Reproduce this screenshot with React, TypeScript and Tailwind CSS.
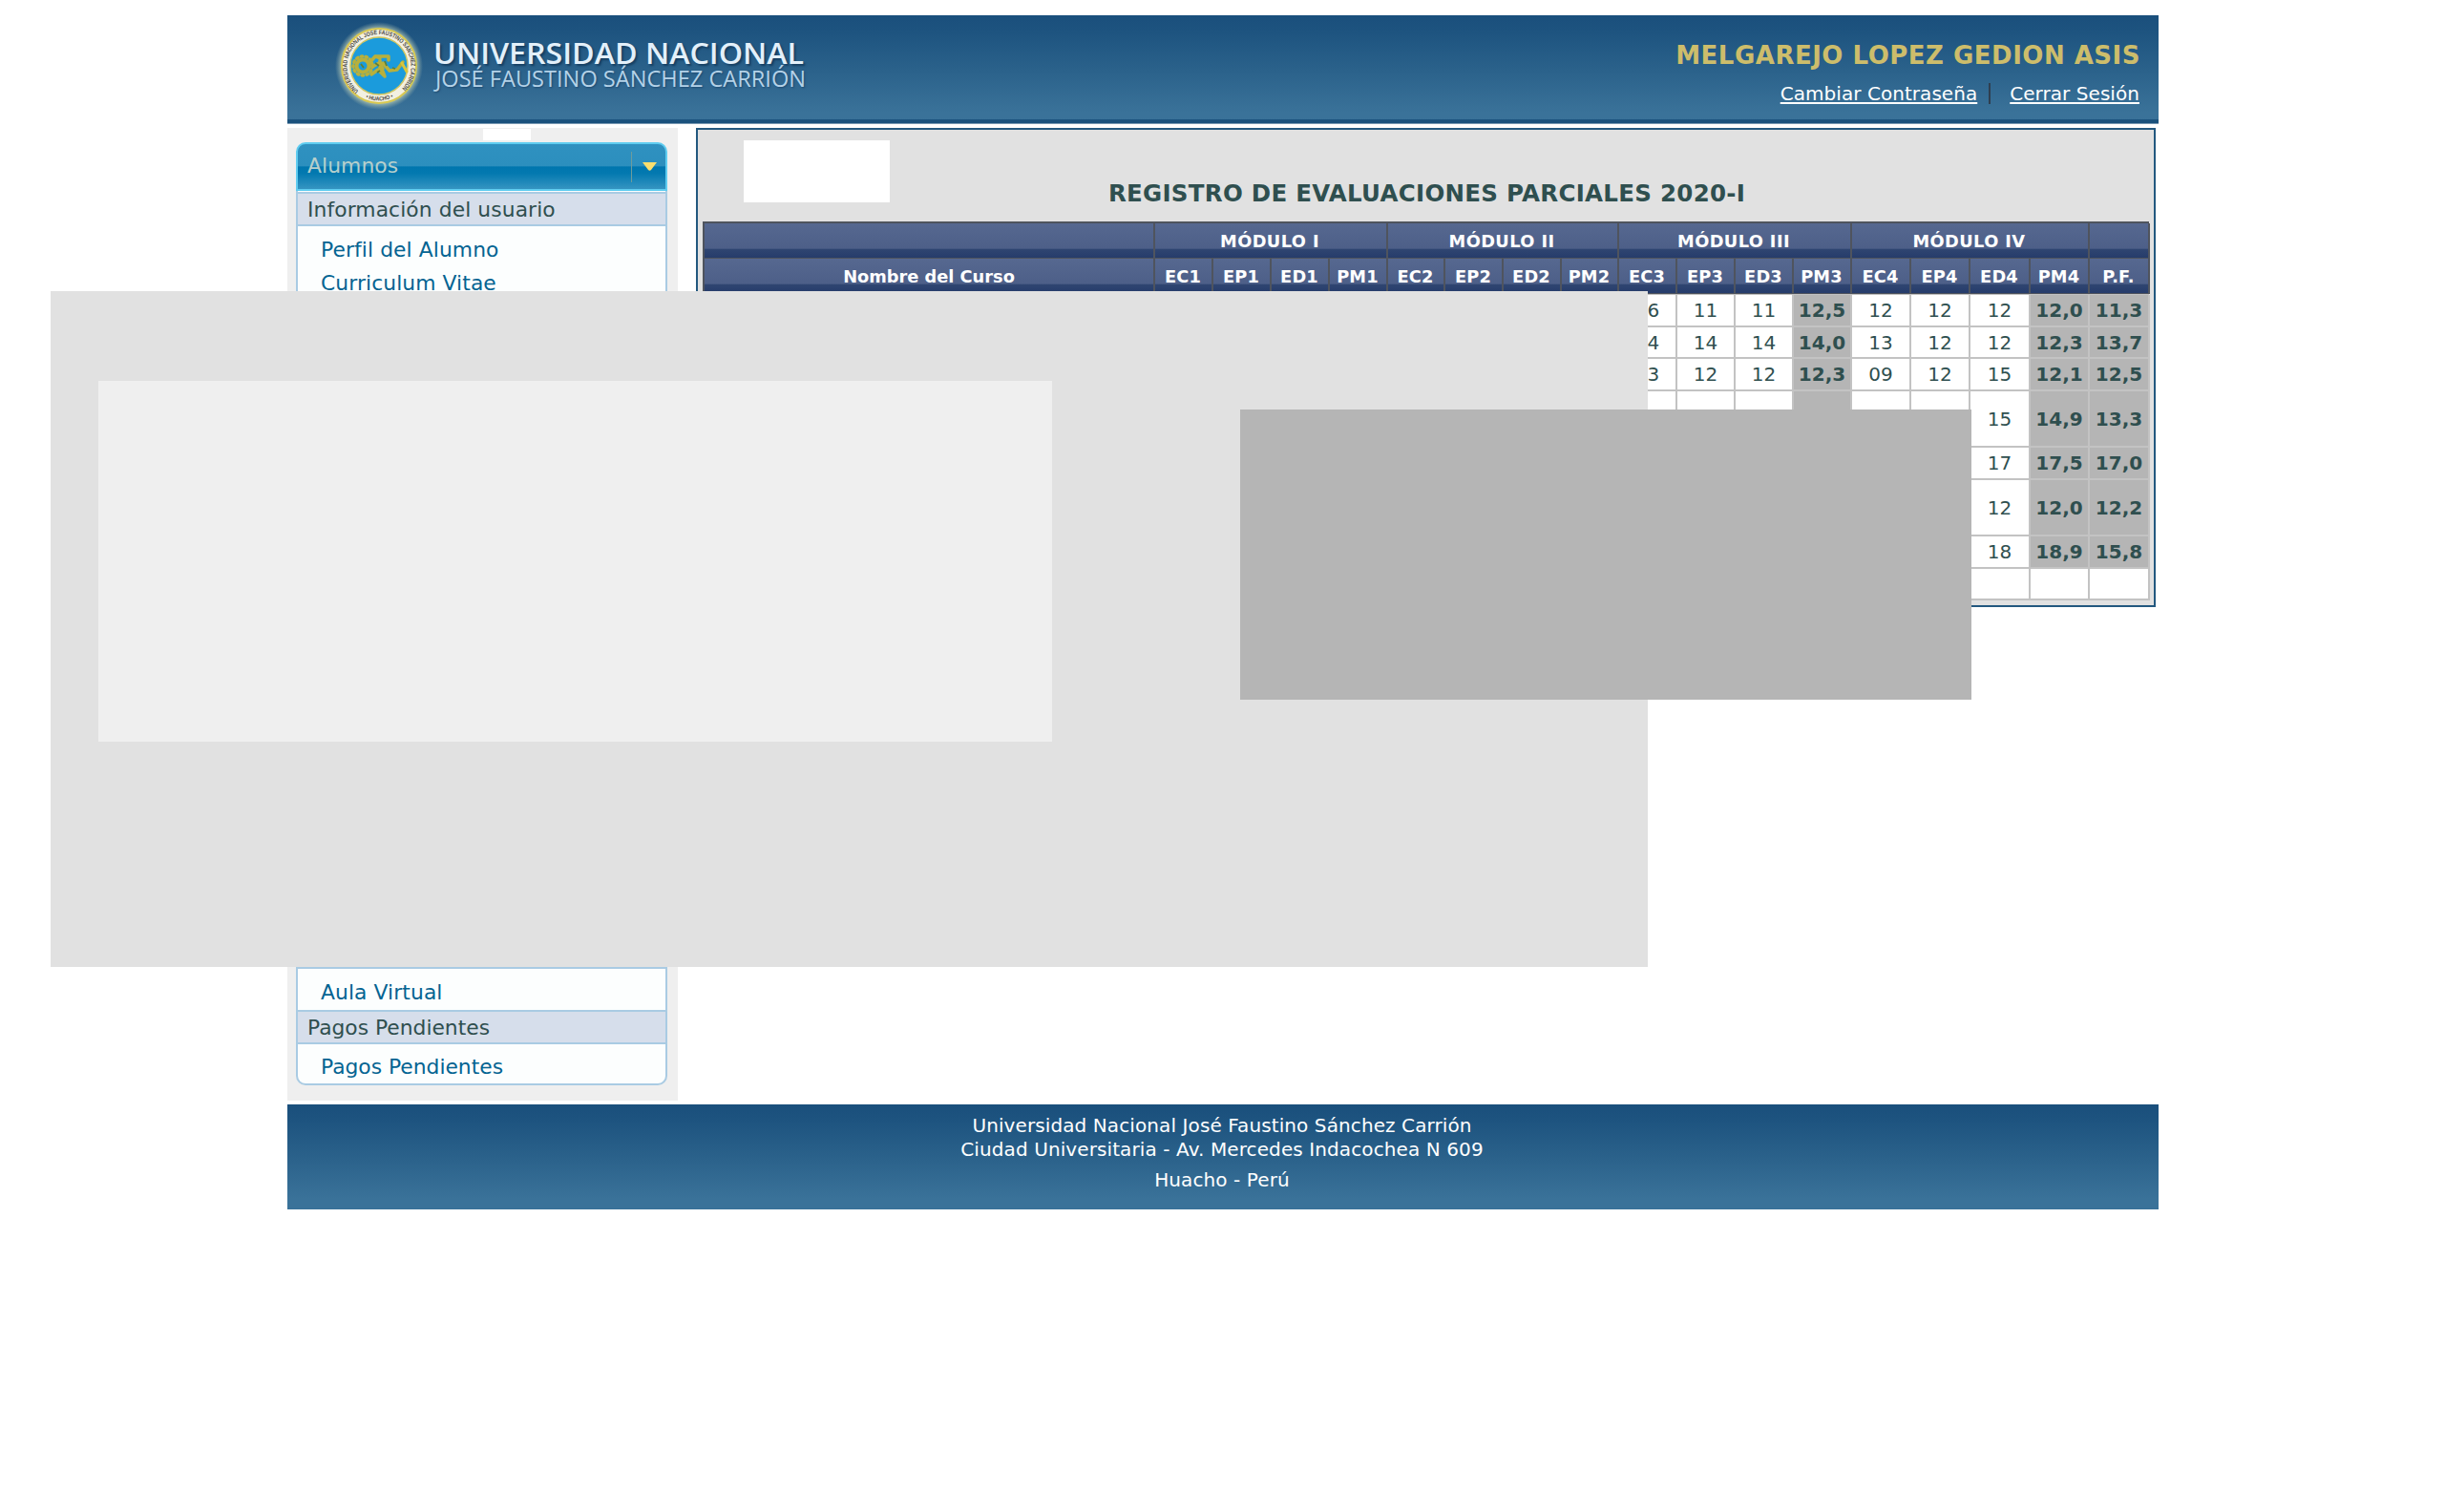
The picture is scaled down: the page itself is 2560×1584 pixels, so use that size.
import React from "react";

const items = (a: string) => a.split(" ");
const cols =
  "grid grid-cols-[472px_61px_61px_61px_61px_60px_61px_61px_60px_61px_61px_61px_61px_62px_62px_63px_62px_63px]";
const dark = "border-r-2 border-b border-[#4f545e]";

const heads = items("EC1 EP1 ED1 PM1 EC2 EP2 ED2 PM2 EC3 EP3 ED3 PM3 EC4 EP4 ED4 PM4 P.F.");
const rows: { h: string; v: string[] }[] = [
  { h: "h-[34px]", v: items("16 11 11 12,5 12 12 12 12,0 11,3") },
  { h: "h-[33px]", v: items("14 14 14 14,0 13 12 12 12,3 13,7") },
  { h: "h-[34px]", v: items("13 12 12 12,3 09 12 15 12,1 12,5") },
  { h: "h-[59px]", v: ["", "", "", "", "", "", "15", "14,9", "13,3"] },
  { h: "h-[34px]", v: ["", "", "", "", "", "", "17", "17,5", "17,0"] },
  { h: "h-[59px]", v: ["", "", "", "", "", "", "12", "12,0", "12,2"] },
  { h: "h-[34px]", v: ["", "", "", "", "", "", "18", "18,9", "15,8"] },
  { h: "h-[33px]", v: ["", "", "", "", "", "", "", "", ""] },
];

function Seal() {
  return (
    <svg className="h-[106px] w-[96px] shrink-0" viewBox="0 0 96 106" fontFamily="Liberation Sans, sans-serif">
      <defs>
        <radialGradient id="halo">
          <stop offset="0.82" stopColor="#d9e2b8" stopOpacity="0.85" />
          <stop offset="1" stopColor="#9fb8b0" stopOpacity="0" />
        </radialGradient>
        <path id="arc" d="M26.500 79.200A33.500 33.500 0 1 1 69.500 79.200" />
        <path id="low" d="M32 85.500Q48 93.500 64 85.500" />
      </defs>
      <circle cx="48" cy="53" r="46" fill="url(#halo)" />
      <circle cx="48" cy="53" r="39" fill="#f3f0e2" stroke="#d8c852" strokeWidth="2" />
      <circle cx="48" cy="53" r="30" fill="#1b9bdc" stroke="#cfc663" strokeWidth="1.500" />
      <text fontSize="6.500" fontWeight="bold" fill="#4b4a46">
        <textPath href="#arc" textLength="160" lengthAdjust="spacingAndGlyphs">UNIVERSIDAD NACIONAL JOSE FAUSTINO SANCHEZ CARRION</textPath>
      </text>
      <text fontSize="6" fontWeight="bold" fill="#4b4a46">
        <textPath href="#low" startOffset="2" textLength="30" lengthAdjust="spacingAndGlyphs">• HUACHO •</textPath>
      </text>
      <g fill="none" stroke="#b8b03c" strokeLinecap="round" strokeLinejoin="round">
        <circle cx="31" cy="53" r="10" strokeWidth="3.500" strokeDasharray="1.500 3.500" />
        <circle cx="31" cy="53" r="6.500" strokeWidth="4" />
        <path strokeWidth="3.500" d="M38 50l6-7 5 2M41 54l7-4 4 6M44 43h14v4M49 47v8M40 62l7-5 6 6M51 56l3 8M52 50l7 8 8-1 6-8" />
        <path strokeWidth="3" stroke="#d9c53c" d="M72 50l5 9" />
      </g>
      <path d="M44 50l4 3M54 48l2 5M29 51l3 4M46 60l3-2M62 55l3 1" stroke="#5d7f3a" strokeWidth="1.800" />
    </svg>
  );
}

function Header() {
  return (
    <header className="flex h-[114px] w-[1960px] justify-between border-b border-b-[#7898b2] bg-[linear-gradient(#1a4f7c_0%,#1d537f_14%,#2b628b_52%,#3a7299_90%,#3a7299_96%,#1a517c_97%)]">
      <div className="flex pl-[48px]">
        <Seal />
        <svg className="h-[100px] w-[410px]" viewBox="0 0 410 100" fontFamily="Open Sans, sans-serif">
          <text
            x="9"
            y="50.500"
            fontSize="31"
            fontWeight="600"
            fill="#e3f0fa"
            textLength="388"
            lengthAdjust="spacingAndGlyphs"
            className="[text-shadow:2px_2px_2px_#163f62]"
          >
            UNIVERSIDAD NACIONAL
          </text>
          <text
            x="11"
            y="74.500"
            fontSize="23.500"
            fill="#b4d2e8"
            textLength="388"
            lengthAdjust="spacingAndGlyphs"
            className="[text-shadow:1px_1px_2px_#1d4a70]"
          >
            JOSÉ FAUSTINO SÁNCHEZ CARRIÓN
          </text>
        </svg>
      </div>
      <div className="flex flex-col items-end pr-5 pt-[26px] whitespace-nowrap">
        <div className="-mr-px h-[32px] text-[26px] leading-[32px] font-bold tracking-[0.5px] text-[#cdbd6b]">MELGAREJO LOPEZ GEDION ASIS</div>
        <div className="mt-[10px] flex h-[28px] items-center text-[20px] leading-[28px] tracking-[0.05px] text-white">
          <span className="underline decoration-2 underline-offset-2">Cambiar Contraseña</span>
          <span className="ml-[12px] mr-[20px] h-[22px] w-[2px] bg-[#2f3f50]" />
          <span className="underline decoration-2 underline-offset-2">Cerrar Sesión</span>
        </div>
      </div>
    </header>
  );
}

function Sidebar() {
  return (
    <nav className="flex h-[1019px] w-[409px] flex-col bg-[#efefef] pl-[9px] text-[21.800px] tracking-[0.1px] whitespace-nowrap">
      <div className="ml-[196px] mt-px h-[12px] w-[50px] bg-white" />
      <div className="mt-[2px] flex h-[51px] w-[389px] items-center justify-between rounded-t-[10px] border-2 border-[#5fccf0] bg-[linear-gradient(#2f91c0_0%,#2c8fbe_48%,#0076ae_51%,#0379b0_65%,#3594c1_100%)] pr-[9px] pl-[10px] text-[#b6cfcc]">
        <span>Alumnos</span>
        <div className="flex items-center gap-[11px]">
          <span className="h-[32px] w-px bg-[#6d9c9c]" />
          <svg className="h-[9px] w-[15px]" viewBox="0 0 15 9"><path d="M0 0H15L9 8Q7.500 9.500 6 8Z" fill="#fbdf6e" /></svg>
        </div>
      </div>
      <div className="flex h-[937px] w-[389px] flex-col rounded-b-[10px] border-x-2 border-b-2 border-[#a9cbe3] bg-[#fcfefe]">
        <div className="mt-px h-[36px] border-y-2 border-[#a9cbe3] bg-[#d6deeb] pl-[10px] leading-[33px] text-[#2f4f4f]">Información del usuario</div>
        <div className="flex grow flex-col pl-[24px] pt-[7px] leading-[36px] text-[#046492]">
          <span className="h-[35px]">Perfil del Alumno</span>
          <span className="h-[35px]">Curriculum Vitae</span>
        </div>
        <div className="flex h-[45px] items-center border-t-2 border-[#a9cbe3] pl-[24px] pt-[7px] text-[#046492]">Aula Virtual</div>
        <div className="h-[36px] border-y-2 border-[#a9cbe3] bg-[#d6deeb] pl-[10px] leading-[33px] tracking-normal text-[#2f4f4f]">Pagos Pendientes</div>
        <div className="flex h-[41px] items-center pt-[7px] pl-[24px] tracking-normal text-[#046492]">Pagos Pendientes</div>
      </div>
    </nav>
  );
}

const headBg = "bg-[linear-gradient(#566890_0%,#4d5f88_73%,#2f4571_75%,#263c6b_100%)] flex items-center justify-center";

function Grades() {
  return (
    <main className="flex h-[502px] w-[1529px] flex-col border-2 border-[#23587f] bg-[#e1e1e1] pl-[5px]">
      <div className="relative h-[96px] text-center">
        <div className="ml-[43px] mt-[11px] h-[65px] w-[153px] bg-white" />
        <div className="absolute inset-x-0 top-[51px] pr-[3px] text-[24.500px] leading-[32px] font-bold tracking-[0.280px] text-[#2f4f4f]">REGISTRO DE EVALUACIONES PARCIALES 2020-I</div>
      </div>
      <div className="w-[1515px] border-l-2 border-t-2 border-[#4f545e] text-[17.800px] font-bold text-white">
        <div className={cols + " h-[37px]"}>
          <div className={dark + " " + headBg} />
          {["MÓDULO I", "MÓDULO II", "MÓDULO III", "MÓDULO IV"].map((m) => (
            <div key={m} className={dark + " col-span-4 pt-[3px] pr-[2px] tracking-[0.4px] " + headBg}>{m}</div>
          ))}
          <div className={dark + " " + headBg} />
        </div>
        <div className={cols + " h-[37px]"}>
          <div className={dark + " pt-[3px] " + headBg}>Nombre del Curso</div>
          {heads.map((m) => (
            <div key={m} className={dark + " pt-[3px] pr-px tracking-[0.2px] " + headBg}>{m}</div>
          ))}
        </div>
      </div>
      <div className="w-[1515px] border-l-2 border-t border-[#c3c3c3] text-[20px] text-[#2f4f4f]">
        {rows.map((r, i) => (
          <div key={i} className={cols + " " + r.h}>
            <div className="border-r-2 border-b-2 border-[#c3c3c3] bg-white" />
            {Array.from({ length: 17 }, (_, c) => (
              <div
                key={c}
                className={
                  "flex items-center justify-center border-r-2 border-b-2 border-[#c3c3c3] " +
                  (i < 7 && (c % 4 === 3 || c === 16) ? "bg-[#b5b5b5] font-bold" : "bg-white")
                }
              >
                {c >= 8 ? r.v[c - 8] : ""}
              </div>
            ))}
          </div>
        ))}
      </div>
    </main>
  );
}

export default function App() {
  return (
    <div className="relative h-[1584px] w-[2560px] overflow-hidden bg-white pt-4 pl-[301px] font-['DejaVu_Sans',sans-serif]">
      <Header />
      <div className="mt-[4px] flex gap-[19px]">
        <Sidebar />
        <Grades />
      </div>
      <footer className="mt-[4px] h-[110px] w-[1960px] bg-[linear-gradient(#1a4f7c_0%,#1d537f_14%,#2b628b_52%,#3a7299_90%)] pt-[10px] pr-[2px] text-center text-[20px] leading-[25px] tracking-[0.1px] text-white">
        <p>Universidad Nacional José Faustino Sánchez Carrión</p>
        <p>Ciudad Universitaria - Av. Mercedes Indacochea N 609</p>
        <p className="mt-[7px]">Huacho - Perú</p>
      </footer>
      <div className="absolute top-[305px] left-[53px] h-[708px] w-[1673px] bg-[#e1e1e1]" />
      <div className="absolute top-[399px] left-[103px] h-[378px] w-[999px] bg-[#efefef]" />
      <div className="absolute top-[429px] left-[1299px] h-[304px] w-[766px] bg-[#b5b5b5]" />
    </div>
  );
}
